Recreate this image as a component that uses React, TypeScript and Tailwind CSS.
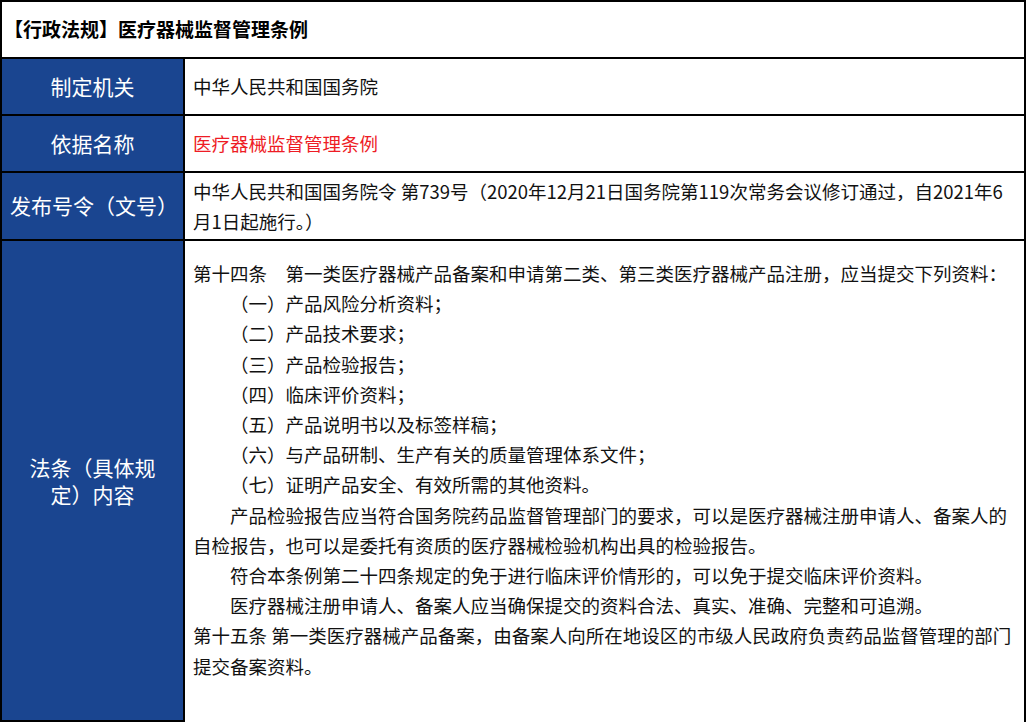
export default function App() {
  const font = { fontFamily: '"Noto Sans CJK SC", "Noto Sans", sans-serif' }
  const label = 'bg-[#1a4590] text-white text-[21px] flex items-center justify-center text-center border-r-2 border-b-2 border-black px-2'
  const cell = 'border-b-2 border-black px-[8px] text-[18.5px] text-[#111] flex items-center'
  return (
    <div className="w-[1026px] h-[724px] bg-white overflow-hidden" style={font}>
      <div className="border-2 border-black border-b-0 h-[722px] flex flex-col">
        <div className="h-[57px] flex items-center px-[2px] text-[19px] font-bold border-b-2 border-black shrink-0">
          【行政法规】医疗器械监督管理条例
        </div>
        <div className="grid grid-cols-[183px_1fr] h-[57px] shrink-0">
          <div className={label}>制定机关</div>
          <div className={cell}>中华人民共和国国务院</div>
        </div>
        <div className="grid grid-cols-[183px_1fr] h-[57px] shrink-0">
          <div className={label}>依据名称</div>
          <div className={cell + ' text-[#ee1c25]'}>医疗器械监督管理条例</div>
        </div>
        <div className="grid grid-cols-[183px_1fr] h-[68px] shrink-0">
          <div className={label + ' px-0'}>发布号令（文号）</div>
          <div className={cell + ' leading-[30px]'}>
            中华人民共和国国务院令 第739号（2020年12月21日国务院第119次常务会议修订通过，自2021年6月1日起施行。）
          </div>
        </div>
        <div className="grid grid-cols-[183px_1fr] flex-1">
          <div className={label + ' border-b-0 leading-[27px] px-4'}>法条（具体规定）内容</div>
          <div className="px-[8px] pt-[17px] text-[18.5px] leading-[30.2px] text-[#111]">
            <p>第十四条　第一类医疗器械产品备案和申请第二类、第三类医疗器械产品注册，应当提交下列资料：</p>
            <p className="pl-[37px]">（一）产品风险分析资料；</p>
            <p className="pl-[37px]">（二）产品技术要求；</p>
            <p className="pl-[37px]">（三）产品检验报告；</p>
            <p className="pl-[37px]">（四）临床评价资料；</p>
            <p className="pl-[37px]">（五）产品说明书以及标签样稿；</p>
            <p className="pl-[37px]">（六）与产品研制、生产有关的质量管理体系文件；</p>
            <p className="pl-[37px]">（七）证明产品安全、有效所需的其他资料。</p>
            <p className="indent-[37px]">产品检验报告应当符合国务院药品监督管理部门的要求，可以是医疗器械注册申请人、备案人的自检报告，也可以是委托有资质的医疗器械检验机构出具的检验报告。</p>
            <p className="indent-[37px]">符合本条例第二十四条规定的免于进行临床评价情形的，可以免于提交临床评价资料。</p>
            <p className="indent-[37px]">医疗器械注册申请人、备案人应当确保提交的资料合法、真实、准确、完整和可追溯。</p>
            <p>第十五条 第一类医疗器械产品备案，由备案人向所在地设区的市级人民政府负责药品监督管理的部门提交备案资料。</p>
          </div>
        </div>
      </div>
    </div>
  )
}
